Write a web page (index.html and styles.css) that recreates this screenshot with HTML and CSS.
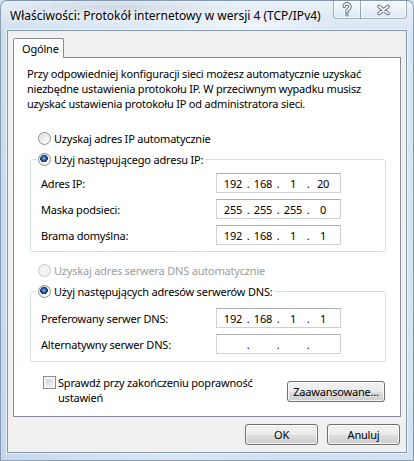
FILE: index.html
```html
<!DOCTYPE html>
<html lang="pl">
<head>
<meta charset="utf-8">
<title>Właściwości</title>
<link rel="stylesheet" href="styles.css">
</head>
<body>
<div class="window">
  <div class="titlebar">
    <div class="title">Właściwości: Protokół internetowy w wersji 4 (TCP/IPv4)</div>
    <div class="caption">
      <div class="cbtn help">
        <svg width="12" height="15" viewBox="0 0 12 15"><path d="M3.2 4.6 A2.9 2.9 0 1 1 7.4 7.2 C6.4 7.8 6 8.4 6 9.6 V10" fill="none" stroke="#6a747f" stroke-width="3.4" stroke-linecap="round"/><path d="M3.2 4.6 A2.9 2.9 0 1 1 7.4 7.2 C6.4 7.8 6 8.4 6 9.6 V10" fill="none" stroke="#fff" stroke-width="1.4" stroke-linecap="round"/><circle cx="6" cy="12.8" r="1.7" fill="#6a747f"/><circle cx="6" cy="12.8" r="0.8" fill="#fff"/></svg>
      </div>
      <div class="cbtn close">
        <svg width="15" height="12" viewBox="0 0 15 12"><path d="M3 2.5 L12 9.5 M12 2.5 L3 9.5" stroke="#6a747f" stroke-width="3.6" stroke-linecap="round"/><path d="M3 2.5 L12 9.5 M12 2.5 L3 9.5" stroke="#fff" stroke-width="1.6" stroke-linecap="round"/></svg>
      </div>
    </div>
  </div>
  <div class="client">
    <div class="tabstrip"><div class="tab">Ogólne</div></div>
    <div class="panel">
      <p class="intro">Przy odpowiedniej konfiguracji sieci możesz automatycznie uzyskać<br>niezbędne ustawienia protokołu IP. W przeciwnym wypadku musisz<br>uzyskać ustawienia protokołu IP od administratora sieci.</p>
      <div class="opt opt-ip"><span class="radio"></span><span>Uzyskaj adres IP automatycznie</span></div>
      <fieldset class="group group-ip">
        <legend class="opt"><span class="radio checked"></span><span>Użyj następującego adresu IP:</span></legend>
        <div class="row"><span class="lbl">Adres IP:</span><div class="ip"><span>192</span><i>.</i><span>168</span><i>.</i><span>1</span><i>.</i><span>20</span></div></div>
        <div class="row"><span class="lbl">Maska podsieci:</span><div class="ip"><span>255</span><i>.</i><span>255</span><i>.</i><span>255</span><i>.</i><span>0</span></div></div>
        <div class="row"><span class="lbl">Brama domyślna:</span><div class="ip"><span>192</span><i>.</i><span>168</span><i>.</i><span>1</span><i>.</i><span>1</span></div></div>
      </fieldset>
      <div class="opt opt-dns disabled"><span class="radio"></span><span>Uzyskaj adres serwera DNS automatycznie</span></div>
      <fieldset class="group group-dns">
        <legend class="opt"><span class="radio checked"></span><span>Użyj następujących adresów serwerów DNS:</span></legend>
        <div class="row"><span class="lbl">Preferowany serwer DNS:</span><div class="ip"><span>192</span><i>.</i><span>168</span><i>.</i><span>1</span><i>.</i><span>1</span></div></div>
        <div class="row"><span class="lbl">Alternatywny serwer DNS:</span><div class="ip"><span></span><i>.</i><span></span><i>.</i><span></span><i>.</i><span></span></div></div>
      </fieldset>
      <div class="bottom">
        <div class="check"><span class="box"></span><span>Sprawdź przy zakończeniu poprawność<br>ustawień</span></div>
        <div class="btn adv">Zaawansowane...</div>
      </div>
    </div>
    <div class="buttons"><div class="btn">OK</div><div class="btn">Anuluj</div></div>
  </div>
</div>
</body>
</html>
```
FILE: styles.css
```css
* { box-sizing: border-box; }
html, body { margin: 0; padding: 0; }
body {
  width: 414px;
  height: 461px;
  overflow: hidden;
  font-family: "Noto Sans", "Open Sans", sans-serif;
  font-size: 11px;
  letter-spacing: -0.2px;
  color: #000;
  background: #cfe0f1;
}
.window {
  width: 414px;
  height: 461px;
  border: 1px solid rgba(60, 80, 110, 0.5);
  border-radius: 7px 7px 0 0;
  display: flex;
  flex-direction: column;
  background:
    radial-gradient(ellipse 120px 10px at 120px 6px, rgba(150, 160, 175, 0.3), transparent),
    radial-gradient(ellipse 90px 8px at 250px 24px, rgba(255, 255, 255, 0.7), transparent),
    linear-gradient(180deg, rgba(255, 255, 255, 0.55) 0, rgba(255, 255, 255, 0.15) 30px, rgba(255, 255, 255, 0) 100%),
    linear-gradient(90deg, #c6d9ed 0, #d9e7f4 40%, #cfe0f1 70%, #d3e3f2 100%);
}
.titlebar {
  height: 29px;
  display: flex;
  align-items: flex-start;
  flex: none;
}
.title {
  flex: 1;
  padding: 7px 0 0 9px;
  font-size: 12px;
  letter-spacing: 0;
  line-height: 15px;
  white-space: nowrap;
  text-shadow: 0 0 6px rgba(255, 255, 255, 0.9);
}
.caption {
  display: flex;
  margin-right: 6px;
}
.cbtn {
  height: 18px;
  display: flex;
  align-items: center;
  justify-content: center;
  border: 1px solid rgba(80, 92, 108, 0.45);
  border-top: none;
  background: linear-gradient(180deg, rgba(255, 255, 255, 0.55), rgba(255, 255, 255, 0.2) 50%, rgba(220, 230, 240, 0.3));
  box-shadow: inset 0 0 0 1px rgba(255, 255, 255, 0.5);
}
.cbtn.help { width: 28px; border-radius: 0 0 0 4px; }
.cbtn.close { width: 47px; border-left: 1px solid rgba(80, 92, 108, 0.3); border-radius: 0 0 4px 0; margin-left: -1px; }

.client {
  margin: 0 6px;
  height: 423px;
  flex: none;
  border: 1px solid #8596a9;
  box-shadow: 0 0 0 1px rgba(255, 255, 255, 0.6);
  background: #f0f0f0;
  padding: 7px 5px 0 5px;
  display: flex;
  flex-direction: column;
}
.tabstrip { display: flex; height: 19px; }
.tab {
  width: 51px;
  height: 20px;
  background: #fff;
  border: 1px solid #898c95;
  border-bottom: none;
  border-radius: 2px 2px 0 0;
  padding: 2px 0 0 8px;
  line-height: 15px;
  position: relative;
  z-index: 1;
}
.panel {
  height: 360px;
  flex: none;
  background: #fff;
  border: 1px solid #898c95;
  display: flex;
  flex-direction: column;
}
.intro {
  margin: 8px 0 0 13px;
  line-height: 15px;
}
.opt {
  display: flex;
  align-items: center;
  line-height: 15px;
  gap: 3px;
}
.opt-ip { margin: 20px 0 0 24px; }
.opt-dns { margin: 11px 0 0 24px; }
.disabled { color: #9d9d9d; }

.radio {
  width: 13px;
  height: 13px;
  flex: none;
  border-radius: 50%;
  border: 1px solid #8b8e93;
  background: radial-gradient(circle at 65% 70%, #fbfbfb 0, #eaeaea 45%, #cfd1d4 100%);
  box-shadow: inset 0 0 0 1px rgba(255, 255, 255, 0.6);
}
.radio.checked {
  background:
    radial-gradient(circle at 45% 40%, #9fd0f8 0, #3d7fcc 1.3px, #1b4a86 2.6px, #0e2b52 3.6px, transparent 4.1px),
    radial-gradient(circle at 65% 70%, #fbfbfb 0, #eaeaea 45%, #cfd1d4 100%);
}
.disabled .radio {
  border-color: #c4c6c9;
  background: #f4f4f4;
  box-shadow: none;
}

.group {
  margin: 6px 14px 0 16px;
  padding: 6px 0 6px 10px;
  border: 1px solid #d5dfe5;
  border-radius: 3px;
  min-inline-size: 0;
}
.group-dns { padding-top: 9px; padding-bottom: 7px; }
.group legend {
  margin-left: -5px;
  padding: 0 2px;
}
.row {
  display: grid;
  grid-template-columns: 175px 125px;
  align-items: center;
  line-height: 15px;
}
.row + .row { margin-top: 6px; }
.ip {
  height: 20px;
  border: 1px solid #cdd0d5;
  border-top-color: #abadb3;
  background: #fff;
  display: flex;
  align-items: center;
  padding-left: 3px;
}
.ip span { width: 26px; text-align: center; }
.ip i { width: 4px; text-align: center; font-style: normal; }

.bottom {
  display: flex;
  align-items: flex-start;
  margin: 13px 15px 0 29px;
}
.check {
  display: flex;
  align-items: flex-start;
  gap: 2px;
  line-height: 15px;
}
.box {
  width: 13px;
  height: 13px;
  flex: none;
  margin-top: 1px;
  border: 1px solid #8e8f8f;
  background: linear-gradient(135deg, #cbcfd5, #f6f6f6);
  box-shadow: inset 0 0 0 2px #f4f4f4;
}
.btn {
  height: 21px;
  width: 73px;
  border: 1px solid #707070;
  border-radius: 3px;
  background: linear-gradient(180deg, #f2f2f2 0%, #ebebeb 50%, #dddddd 51%, #cfcfcf 100%);
  box-shadow: inset 0 0 0 1px rgba(255, 255, 255, 0.75);
  display: flex;
  align-items: center;
  justify-content: center;
  line-height: 15px;
}
.btn.adv {
  width: 98px;
  margin: 6px 0 0 auto;
}
.buttons {
  display: flex;
  justify-content: flex-end;
  gap: 9px;
  margin-top: 7px;
  padding-right: 1px;
}
```
